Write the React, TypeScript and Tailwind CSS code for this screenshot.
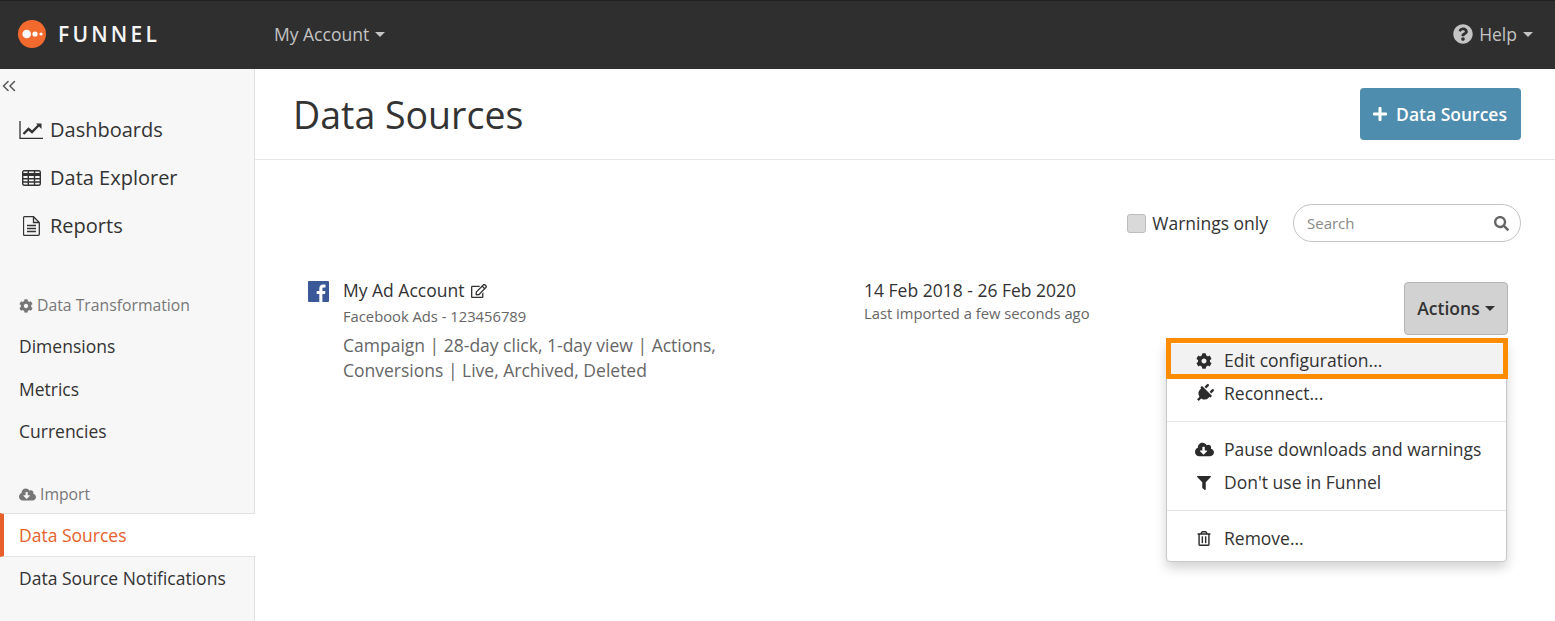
import React from 'react';
import {
  FaCloudDownloadAlt,
  FaCog,
  FaFilter,
  FaPlug,
  FaPlus,
  FaQuestionCircle,
  FaRegEdit,
  FaRegTrashAlt,
  FaSearch,
} from 'react-icons/fa';
import { ChevronsLeft } from 'lucide-react';

const Caret = ({ className }: { className: string }) => (
  <span className={`inline-block w-0 h-0 border-x-[5px] border-x-transparent border-t-[5px] ${className}`} />
);

const LineChartIcon = () => (
  <svg width="24" height="18" viewBox="0 0 24 18" fill="none" stroke="#333">
    <path d="M1 0v17.3h23" strokeWidth="1.3" />
    <path d="M4.5 13l5-5 3.5 3 6.5-6.5" strokeWidth="2.4" />
    <path d="M17 2.5h5.5V8z" fill="#333" stroke="none" />
  </svg>
);

const TableIcon = () => (
  <svg width="19" height="16" viewBox="0 0 19 16" fill="none" stroke="#333" strokeWidth="1.4">
    <rect x="0.7" y="0.7" width="17.6" height="14.6" rx="1.5" />
    <path d="M0.7 4.5h17.6" strokeWidth="3" />
    <path d="M0.7 8.7h17.6M0.7 12h17.6M6.3 1v14M12.5 1v14" />
  </svg>
);

const FileTextIcon = () => (
  <svg width="17" height="20" viewBox="0 0 17 20" fill="none" stroke="#333" strokeWidth="1.3">
    <path d="M1.5.7h9l5.8 5.8v11.8a1 1 0 0 1-1 1H1.5a1 1 0 0 1-1-1V1.7a1 1 0 0 1 1-1z" />
    <path d="M10.5 1v5.5h5.5M4 9.5h9M4 12.5h9M4 15.5h9" />
  </svg>
);

const MainNavItem = ({ icon, label }: { icon: React.ReactNode; label: string }) => (
  <div className="h-12 flex items-center text-[20px] text-[#333]">
    <span className="flex justify-center w-[50px] pl-[14px] pr-[2px] text-[#333]">{icon}</span>
    {label}
  </div>
);

const SubNavItem = ({ label }: { label: string }) => (
  <div className="h-[42.5px] flex items-center pl-[19px] text-[17.5px] text-[#333]">{label}</div>
);

const MenuItem = ({ icon, label, active }: { icon: React.ReactNode; label: string; active?: boolean }) => (
  <div className={`h-[33px] flex items-center text-[17.5px] text-[#333] ${active ? 'bg-[#f2f2f2]' : ''}`}>
    <span className="w-[57px] flex justify-center pl-[17px] text-[#2b2b2b]">{icon}</span>
    {label}
  </div>
);

export default function App() {
  return (
    <div className="w-[1555px] h-[621px] overflow-hidden bg-white font-['Open_Sans',sans-serif]">
      {/* Top bar */}
      <header className="h-[69px] bg-[#2f2f2f] border-t border-t-[#1f1f1f] flex items-center pb-[2px]">
        <div className="w-[274px] flex items-center pl-[18px]">
          <svg width="28" height="28" viewBox="0 0 28 28">
            <circle cx="14" cy="14" r="14" fill="#f26a2e" />
            <circle cx="8.7" cy="14" r="4.3" fill="#fff" />
            <circle cx="17" cy="14" r="2.6" fill="#fff" />
            <circle cx="23" cy="14" r="1.6" fill="#fff" />
          </svg>
          <span className="ml-[12px] text-[21px] leading-none font-semibold tracking-[3.2px] text-[#f5f5f5]">FUNNEL</span>
        </div>
        <div className="flex items-center text-[17.5px] text-[#c4c4c4]">
          My Account
          <Caret className="ml-[6px] border-t-[#c4c4c4]" />
        </div>
        <div className="ml-auto pr-[22px] flex items-center text-[17.5px] text-[#c4c4c4]">
          <FaQuestionCircle className="w-[20px] h-[20px] mr-[6px]" />
          Help
          <Caret className="ml-[6px] border-t-[#c4c4c4]" />
        </div>
      </header>

      <div className="flex h-[552px]">
        {/* Sidebar */}
        <aside className="w-[255px] shrink-0 bg-[#f7f7f7] border-r border-r-[#e0e0e0] relative">
          <div className="h-[37px] pt-[6px] text-[#555]">
            <ChevronsLeft className="w-[22px] h-[22px] -ml-[2px]" strokeWidth={1.6} />
          </div>
          <MainNavItem icon={<LineChartIcon />} label="Dashboards" />
          <MainNavItem icon={<TableIcon />} label="Data Explorer" />
          <MainNavItem icon={<FileTextIcon />} label="Reports" />

          <div className="mt-[44px] pl-[19px] h-[24px] flex items-center text-[15.75px] text-[#777]">
            <FaCog className="w-[14px] h-[14px] mr-[4px]" />
            Data Transformation
          </div>
          <div className="mt-[7px]">
            <SubNavItem label="Dimensions" />
            <SubNavItem label="Metrics" />
            <SubNavItem label="Currencies" />
          </div>

          <div className="mt-[30px] pl-[19px] h-[24px] flex items-center text-[15.75px] text-[#777]">
            <FaCloudDownloadAlt className="w-[17px] h-[17px] mr-[4px]" />
            Import
          </div>
          <div className="mt-[6px] w-[255px] h-[44px] bg-white border-y border-y-[#e3e3e3] border-l-[4px] border-l-[#e5602b] flex items-center pl-[15px] pt-[2px] text-[17.5px] text-[#e5602b]">
            Data Sources
          </div>
          <SubNavItem label="Data Source Notifications" />
        </aside>

        {/* Main */}
        <main className="flex-1 min-w-0">
          <div className="h-[91px] border-b border-b-[#e6e6e6] flex items-center justify-between pl-[38px] pr-[34px]">
            <h1 className="mt-[2px] text-[37.5px] leading-none text-[#333]">Data Sources</h1>
            <button className="h-[52px] w-[161px] rounded-[4px] bg-[#4e8dae] flex items-center justify-center text-[17.5px] font-semibold text-white">
              <FaPlus className="w-[16px] h-[16px] mr-[8px] -ml-[2px]" />
              Data Sources
            </button>
          </div>

          <div className="flex items-center justify-end pr-[34px] pt-[44px]">
            <span className="w-[19px] h-[19px] rounded-[3px] bg-[#d9d9d9] border border-[#bdbdbd] mr-[6px]" />
            <span className="text-[17.5px] text-[#333]">Warnings only</span>
            <div className="ml-[25px] w-[228px] h-[38px] rounded-full border border-[#c4c4c4] flex items-center justify-between pl-[13px] pr-[11px]">
              <span className="text-[15px] text-[#888]">Search</span>
              <FaSearch className="w-[15px] h-[15px] text-[#666]" />
            </div>
          </div>

          <div className="relative flex pl-[53px] pr-[47px] pt-[36px]">
            <svg className="mt-[3px] shrink-0" width="21" height="21" viewBox="0 0 21 21">
              <rect width="21" height="21" rx="1" fill="#3b5998" />
              <path d="M14.4 21v-8h2.6l.4-3.1h-3V8c0-.9.3-1.5 1.5-1.5h1.6V3.7c-.3 0-1.2-.1-2.3-.1-2.3 0-3.9 1.4-3.9 4v2.3H8.7V13h2.6v8z" fill="#fff" />
            </svg>
            <div className="ml-[14px] w-[521px] shrink-0">
              <div className="flex items-center text-[17.5px] leading-[25px] text-[#333]">
                My Ad Account
                <FaRegEdit className="w-[16px] h-[16px] ml-[7px]" />
              </div>
              <div className="mt-[3px] text-[14.75px] leading-[20px] text-[#666]">Facebook Ads - 123456789</div>
              <div className="mt-[7px] w-[400px] text-[17.5px] leading-[25px] text-[#666]">
                Campaign | 28-day click, 1-day view | Actions, Conversions | Live, Archived, Deleted
              </div>
            </div>
            <div>
              <div className="text-[17.5px] leading-[25px] text-[#333]">14 Feb 2018 - 26 Feb 2020</div>
              <div className="text-[14.75px] leading-[20px] text-[#666]">Last imported a few seconds ago</div>
            </div>
            <button className="ml-auto mt-[4px] h-[53px] w-[104px] rounded-[4px] bg-[#d2d2d2] border border-[#b5b5b5] flex items-center justify-center text-[17.5px] font-semibold text-[#333]">
              Actions
              <Caret className="ml-[5px] border-t-[#333]" />
            </button>

            {/* Dropdown menu */}
            <div className="absolute left-[911px] top-[97px] w-[341px] h-[223px] bg-white rounded-[4px] border border-[#c8c8c8] shadow-[0_6px_12px_rgba(0,0,0,0.175)] pt-[4px]">
              <MenuItem active icon={<FaCog className="w-[16px] h-[16px]" />} label="Edit configuration..." />
              <MenuItem icon={<FaPlug className="w-[19px] h-[19px] rotate-45" />} label="Reconnect..." />
              <div className="my-[11px] h-px bg-[#e5e5e5]" />
              <MenuItem icon={<FaCloudDownloadAlt className="w-[19px] h-[19px]" />} label="Pause downloads and warnings" />
              <MenuItem icon={<FaFilter className="w-[14px] h-[14px]" />} label="Don't use in Funnel" />
              <div className="my-[11px] h-px bg-[#e5e5e5]" />
              <MenuItem icon={<FaRegTrashAlt className="w-[14px] h-[15px]" />} label="Remove..." />
              {/* Highlight annotation */}
              <div className="absolute left-[-1px] top-[-2px] w-[342px] h-[41px] border-[5px] border-[#ff8c00]" />
            </div>
          </div>
        </main>
      </div>
    </div>
  );
}
